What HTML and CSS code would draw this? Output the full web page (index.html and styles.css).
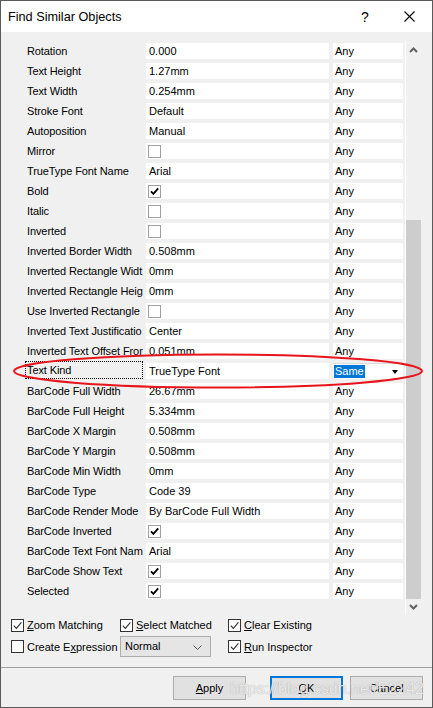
FILE: index.html
```html
<!DOCTYPE html>
<html>
<head>
<meta charset="utf-8">
<title>Find Similar Objects</title>
<link rel="stylesheet" href="styles.css">
</head>
<body>
<div class="dialog">
  <div class="titlebar">
    <span class="title">Find Similar Objects</span>
    <span class="help">?</span>
    <svg class="close" width="11" height="11" viewBox="0 0 11 11"><path d="M0.5 0.5L10.5 10.5M10.5 0.5L0.5 10.5" stroke="#000" stroke-width="1.1" fill="none"/></svg>
  </div>
  <div class="body">
    <div class="grid">
      <div class="rows">
        <div class="row"><div class="lbl">Rotation</div><div class="val">0.000</div><div class="any">Any</div></div>
        <div class="row"><div class="lbl">Text Height</div><div class="val">1.27mm</div><div class="any">Any</div></div>
        <div class="row"><div class="lbl">Text Width</div><div class="val">0.254mm</div><div class="any">Any</div></div>
        <div class="row"><div class="lbl">Stroke Font</div><div class="val">Default</div><div class="any">Any</div></div>
        <div class="row"><div class="lbl">Autoposition</div><div class="val">Manual</div><div class="any">Any</div></div>
        <div class="row"><div class="lbl">Mirror</div><div class="val"><span class="gbox"></span></div><div class="any">Any</div></div>
        <div class="row"><div class="lbl">TrueType Font Name</div><div class="val">Arial</div><div class="any">Any</div></div>
        <div class="row"><div class="lbl">Bold</div><div class="val"><span class="gbox"><svg viewBox="0 0 11 11" width="11" height="11"><path d="M2 5.3l2.4 2.6 4.8-5.6" stroke="#000" stroke-width="1.8" fill="none"/></svg></span></div><div class="any">Any</div></div>
        <div class="row"><div class="lbl">Italic</div><div class="val"><span class="gbox"></span></div><div class="any">Any</div></div>
        <div class="row"><div class="lbl">Inverted</div><div class="val"><span class="gbox"></span></div><div class="any">Any</div></div>
        <div class="row"><div class="lbl">Inverted Border Width</div><div class="val">0.508mm</div><div class="any">Any</div></div>
        <div class="row"><div class="lbl">Inverted Rectangle Widt</div><div class="val">0mm</div><div class="any">Any</div></div>
        <div class="row"><div class="lbl">Inverted Rectangle Heig</div><div class="val">0mm</div><div class="any">Any</div></div>
        <div class="row"><div class="lbl">Use Inverted Rectangle</div><div class="val"><span class="gbox"></span></div><div class="any">Any</div></div>
        <div class="row"><div class="lbl">Inverted Text Justificatio</div><div class="val">Center</div><div class="any">Any</div></div>
        <div class="row"><div class="lbl">Inverted Text Offset Fror</div><div class="val">0.051mm</div><div class="any">Any</div></div>
        <div class="row sel"><div class="lbl">Text Kind</div><div class="val">TrueType Font</div><div class="any combo"><span class="hl">Same</span><span class="tri"></span></div></div>
        <div class="row"><div class="lbl">BarCode Full Width</div><div class="val">26.67mm</div><div class="any">Any</div></div>
        <div class="row"><div class="lbl">BarCode Full Height</div><div class="val">5.334mm</div><div class="any">Any</div></div>
        <div class="row"><div class="lbl">BarCode X Margin</div><div class="val">0.508mm</div><div class="any">Any</div></div>
        <div class="row"><div class="lbl">BarCode Y Margin</div><div class="val">0.508mm</div><div class="any">Any</div></div>
        <div class="row"><div class="lbl">BarCode Min Width</div><div class="val">0mm</div><div class="any">Any</div></div>
        <div class="row"><div class="lbl">BarCode Type</div><div class="val">Code 39</div><div class="any">Any</div></div>
        <div class="row"><div class="lbl">BarCode Render Mode</div><div class="val">By BarCode Full Width</div><div class="any">Any</div></div>
        <div class="row"><div class="lbl">BarCode Inverted</div><div class="val"><span class="gbox"><svg viewBox="0 0 11 11" width="11" height="11"><path d="M2 5.3l2.4 2.6 4.8-5.6" stroke="#000" stroke-width="1.8" fill="none"/></svg></span></div><div class="any">Any</div></div>
        <div class="row"><div class="lbl">BarCode Text Font Nam</div><div class="val">Arial</div><div class="any">Any</div></div>
        <div class="row"><div class="lbl">BarCode Show Text</div><div class="val"><span class="gbox"><svg viewBox="0 0 11 11" width="11" height="11"><path d="M2 5.3l2.4 2.6 4.8-5.6" stroke="#000" stroke-width="1.8" fill="none"/></svg></span></div><div class="any">Any</div></div>
        <div class="row"><div class="lbl">Selected</div><div class="val"><span class="gbox"><svg viewBox="0 0 11 11" width="11" height="11"><path d="M2 5.3l2.4 2.6 4.8-5.6" stroke="#000" stroke-width="1.8" fill="none"/></svg></span></div><div class="any">Any</div></div>
      </div>
      <div class="scroll">
        <div class="sb-btn up"><svg width="9" height="6" viewBox="0 0 9 6"><path d="M1 5L4.5 1.5L8 5" stroke="#606060" stroke-width="2" fill="none"/></svg></div>
        <div class="sb-track"><div class="sb-thumb"></div></div>
        <div class="sb-btn down"><svg width="9" height="6" viewBox="0 0 9 6"><path d="M1 1L4.5 4.5L8 1" stroke="#606060" stroke-width="2" fill="none"/></svg></div>
      </div>
    </div>
    <div class="options">
      <div class="opt-row r1">
        <label class="chk"><span class="box"><svg viewBox="0 0 11 11" width="11" height="11"><path d="M1.8 5.6l2.6 2.8 5-6" stroke="#333" stroke-width="1.1" fill="none"/></svg></span><span><u>Z</u>oom Matching</span></label>
        <label class="chk"><span class="box"><svg viewBox="0 0 11 11" width="11" height="11"><path d="M1.8 5.6l2.6 2.8 5-6" stroke="#333" stroke-width="1.1" fill="none"/></svg></span><span><u>S</u>elect Matched</span></label>
        <label class="chk"><span class="box"><svg viewBox="0 0 11 11" width="11" height="11"><path d="M1.8 5.6l2.6 2.8 5-6" stroke="#333" stroke-width="1.1" fill="none"/></svg></span><span><u>C</u>lear Existing</span></label>
      </div>
      <div class="opt-row r2">
        <label class="chk"><span class="box"></span><span>Create E<u>x</u>pression</span></label>
        <div class="select"><span>Normal</span><svg width="9" height="5" viewBox="0 0 9 5"><path d="M0.5 0.5L4.5 4.5L8.5 0.5" stroke="#555" stroke-width="1" fill="none"/></svg></div>
        <label class="chk"><span class="box"><svg viewBox="0 0 11 11" width="11" height="11"><path d="M1.8 5.6l2.6 2.8 5-6" stroke="#333" stroke-width="1.1" fill="none"/></svg></span><span><u>R</u>un Inspector</span></label>
      </div>
    </div>
  </div>
  <div class="footer">
    <div class="btn apply"><u>A</u>pply</div>
    <div class="btn ok"><u>O</u>K</div>
    <div class="btn cancel">Cancel</div>
  </div>
  <svg class="ring" width="433" height="708" viewBox="0 0 433 708"><ellipse cx="218" cy="371" rx="204" ry="16.5" stroke="#e8141b" stroke-width="2" fill="none"/></svg>
  <div class="watermark">https://blog.csdn.net/E2242</div>
</div>
</body>
</html>
```

FILE: styles.css
```css
html, body {
  margin: 0;
  padding: 0;
  background: #ffffff;
}

body {
  font-family: "Liberation Sans", Arial, sans-serif;
  color: #000;
}

.dialog {
  position: relative;
  width: 433px;
  height: 708px;
  box-sizing: border-box;
  border: 1px solid #5a5a5a;
  background: #f0f0f0;
  display: flex;
  flex-direction: column;
  overflow: hidden;
}

.titlebar {
  flex: none;
  height: 31px;
  background: #ffffff;
  display: flex;
  align-items: center;
}

.title {
  flex: 1;
  margin-left: 7px;
  font-size: 12.7px;
}

.help {
  width: 12px;
  text-align: center;
  font-size: 14px;
  margin-right: 33px;
}

.close {
  margin-right: 17px;
  display: block;
}

.body {
  flex: none;
  padding-top: 9px;
  padding-bottom: 10px;
}

.grid {
  display: flex;
  height: 574px;
}

.rows {
  width: 404px;
  border-right: 1px solid #ffffff;
}

.row {
  display: flex;
  align-items: center;
  height: 20px;
  padding-left: 24px;
  font-size: 11px;
}

.lbl {
  width: 119px;
  padding-left: 2px;
  height: 16px;
  line-height: 16px;
  white-space: nowrap;
  letter-spacing: -0.1px;
}

.val {
  width: 180px;
  padding-left: 3px;
  height: 16px;
  line-height: 16px;
  background: #ffffff;
  display: flex;
  align-items: center;
  white-space: nowrap;
}

.any {
  width: 68px;
  padding-left: 2px;
  margin-left: 4px;
  height: 16px;
  line-height: 16px;
  background: #ffffff;
}

.gbox {
  width: 11px;
  height: 11px;
  border: 1px solid #a0a0a0;
  background: #ffffff;
  margin-left: -1px;
  display: block;
}

.gbox svg {
  display: block;
}

.row.sel .lbl {
  align-self: flex-start;
  width: 115px;
  padding-left: 1px;
  margin-right: 3px;
  border: 1px dotted #000;
  height: 16px;
}

.any.combo {
  display: flex;
  align-items: center;
  justify-content: space-between;
  box-sizing: border-box;
  width: 70px;
  padding-left: 1px;
  border-top: 1px solid #dcdcdc;
}

.hl {
  background: #0078d7;
  color: #fff;
  line-height: 13px;
  padding: 0 1px;
}

.tri {
  width: 0;
  height: 0;
  border-top: 4px solid #000;
  border-left: 3.5px solid transparent;
  border-right: 3.5px solid transparent;
  margin-right: 5px;
}

.scroll {
  width: 15px;
  display: flex;
  flex-direction: column;
}

.sb-btn {
  display: flex;
  align-items: center;
  justify-content: center;
}

.sb-btn.up {
  height: 17px;
}

.sb-btn.down {
  height: 16px;
}

.sb-btn svg {
  display: block;
}

.sb-track {
  flex: 1;
}

.sb-thumb {
  margin-top: 162px;
  height: 379px;
  background: #cdcdcd;
}

.options {
  padding: 1px 0 0 10px;
  font-size: 11px;
}

.opt-row {
  display: grid;
  grid-template-columns: 109px 108px auto;
  align-items: center;
}

.opt-row.r1 {
  height: 18px;
}

.opt-row.r2 {
  height: 21px;
  margin-top: 2px;
}

.chk {
  display: flex;
  align-items: center;
  gap: 3px;
  white-space: nowrap;
}

.box {
  width: 11px;
  height: 11px;
  border: 1px solid #333;
  background: #fff;
  display: block;
}

.box svg {
  display: block;
}

.select {
  width: 91px;
  height: 21px;
  box-sizing: border-box;
  border: 1px solid #adadad;
  background: #e5e5e5;
  display: flex;
  align-items: center;
  justify-content: space-between;
  padding: 0 8px 2px 4px;
}

.select svg {
  display: block;
  margin-top: 3px;
}

.footer {
  flex: 1;
  border-top: 1px solid #a0a0a0;
  display: flex;
  justify-content: flex-end;
  align-items: flex-start;
  padding: 8px 9px 0 0;
}

.btn {
  width: 73px;
  height: 24px;
  box-sizing: border-box;
  border: 1px solid #adadad;
  background: #e1e1e1;
  font-size: 11px;
  display: flex;
  align-items: center;
  justify-content: center;
}

.btn.apply {
  margin-right: 24px;
}

.btn.ok {
  margin-right: 7px;
  border: 2px solid #0078d7;
}

.ring {
  position: absolute;
  left: -1px;
  top: -1px;
  pointer-events: none;
}

.watermark {
  position: absolute;
  left: 229px;
  top: 679px;
  font-size: 16px;
  color: rgba(255, 255, 255, 0.8);
  text-shadow: 0 0 1px rgba(90, 90, 90, 0.6);
  white-space: nowrap;
  pointer-events: none;
}
```
